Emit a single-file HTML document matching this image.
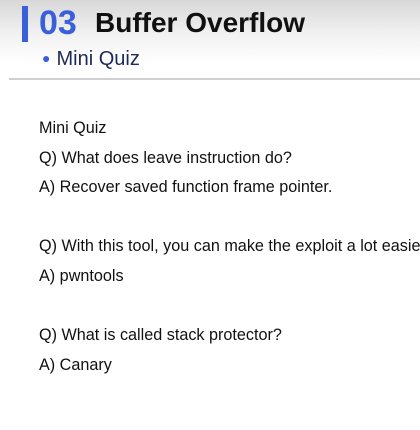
<!DOCTYPE html>
<html><head><style>
html,body{margin:0;padding:0;width:420px;height:430px;overflow:hidden;background:#fff;font-family:"Liberation Sans",Arial,sans-serif;}
.hdr{position:absolute;left:0;top:0;width:420px;height:78px;background:linear-gradient(#d8d8d8 0%,#f2f2f2 45%,#fff 80%);}
.bar{position:absolute;left:22px;top:6px;width:6px;height:36px;background:#3a5fd8;}
.num{position:absolute;left:39px;top:3px;font-size:34px;font-weight:bold;color:#3a5fd8;line-height:40px;}
.title{position:absolute;left:95px;top:4px;font-size:28px;font-weight:bold;color:#111;line-height:38px;}
.sub{position:absolute;left:42px;top:46px;font-size:20px;color:#1e2a55;line-height:26px;}
.sub span{color:#3a5fd8;font-size:14px;margin-right:6px;position:relative;top:-2px;}
.line{position:absolute;left:9px;top:78px;width:411px;height:2px;background:#cfcfcf;}
.t{position:absolute;left:39px;font-size:16.2px;color:#111;line-height:18px;white-space:nowrap;}
</style></head><body>
<div class="hdr"></div>
<div class="bar"></div>
<div class="num">03</div>
<div class="title">Buffer Overflow</div>
<div class="sub"><span>●</span>Mini Quiz</div>
<div class="line"></div>
<div class="t" style="top:119px">Mini Quiz</div>
<div class="t" style="top:149px">Q) What does leave instruction do?</div>
<div class="t" style="top:178px">A) Recover saved function frame pointer.</div>
<div class="t" style="top:237px">Q) With this tool, you can make the exploit a lot easier</div>
<div class="t" style="top:267px">A) pwntools</div>
<div class="t" style="top:326px">Q) What is called stack protector?</div>
<div class="t" style="top:356px">A) Canary</div>
</body></html>
